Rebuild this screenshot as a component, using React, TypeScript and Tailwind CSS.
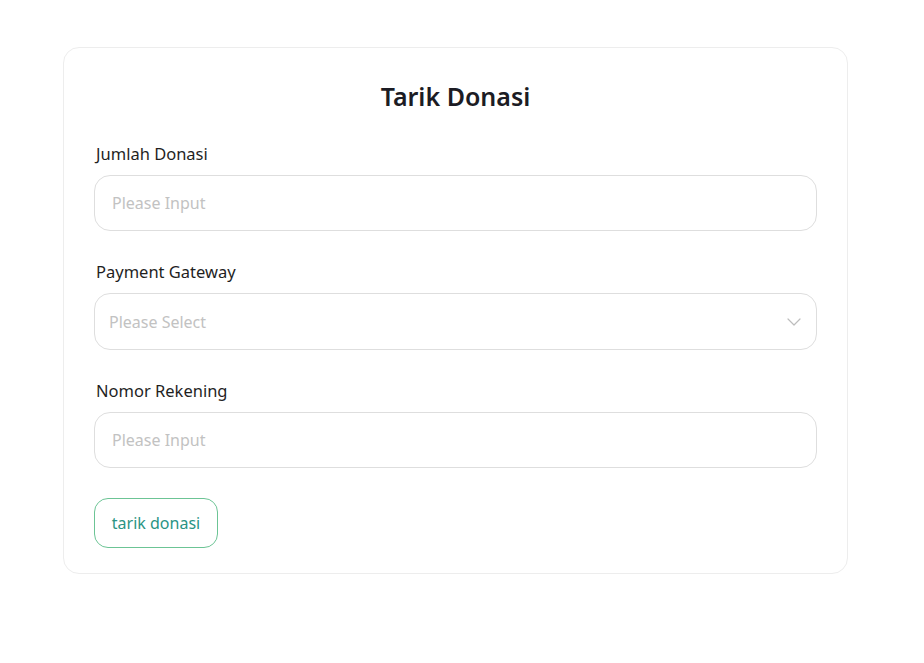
import { ChevronDown } from "lucide-react";

function Field({ label, children }: { label: string; children: React.ReactNode }) {
  return (
    <div className="flex flex-col">
      <label className="pl-[2px] text-[16.5px] leading-[22px] text-[#1f1f1f]">{label}</label>
      <div className="mt-[10px]">{children}</div>
    </div>
  );
}

export default function App() {
  return (
    <div
      className="min-h-[663px] bg-white pt-[47px] pl-[63px]"
      style={{ fontFamily: '"Noto Sans", "Open Sans", sans-serif' }}
    >
      <div className="w-[785px] h-[527px] rounded-[16px] border border-[#ededed] bg-white px-[30px] pt-[28px]">
        <h1 className="text-center text-[25px] leading-[40px] font-semibold text-[#1c1c24]">
          Tarik Donasi
        </h1>

        <div className="mt-[27px] flex flex-col gap-[30px]">
          <Field label="Jumlah Donasi">
            <input
              placeholder="Please Input"
              className="w-full h-[56px] rounded-[16px] border border-[#dedede] px-[17px] text-[16px] text-[#333] placeholder:text-[#c2c2c2] outline-none"
            />
          </Field>

          <Field label="Payment Gateway">
            <div className="w-full h-[57px] rounded-[16px] border border-[#dedede] pl-[14px] pr-[10px] flex items-center justify-between">
              <span className="text-[16px] text-[#c2c2c2]">Please Select</span>
              <ChevronDown size={24} strokeWidth={1.2} className="text-[#bdbdbd]" />
            </div>
          </Field>

          <Field label="Nomor Rekening">
            <input
              placeholder="Please Input"
              className="w-full h-[56px] rounded-[16px] border border-[#dedede] px-[17px] text-[16px] text-[#333] placeholder:text-[#c2c2c2] outline-none"
            />
          </Field>
        </div>

        <button className="mt-[30px] h-[50px] w-[124px] rounded-[14px] border border-[#6cc495] text-[16px] text-[#2a9484] bg-white">
          tarik donasi
        </button>
      </div>
    </div>
  );
}
